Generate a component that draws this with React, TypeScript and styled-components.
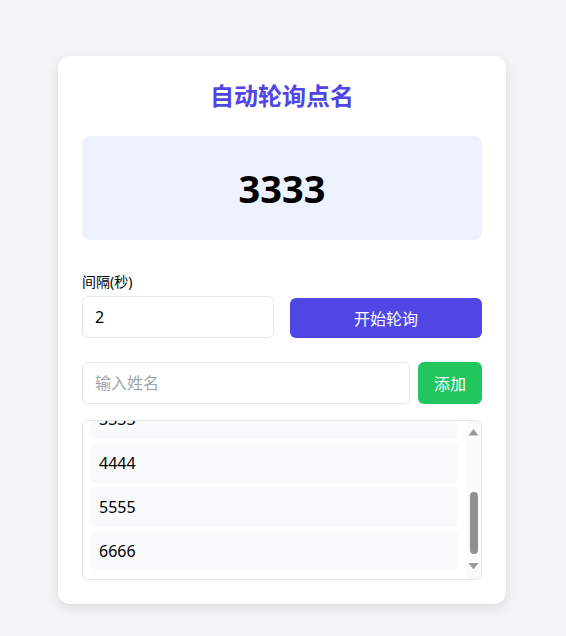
import React, { useEffect, useRef } from "react";
import styled, { createGlobalStyle } from "styled-components";

const Global = createGlobalStyle`
  html, body { margin: 0; padding: 0; background: #f3f4f6; }
  body { font-family: "Noto Sans", "Noto Sans CJK SC", sans-serif; color: #000; }
  * { box-sizing: border-box; }
`;

const Page = styled.div`
  min-height: 636px;
  padding: 56px 2px 0 0;
  display: flex;
  justify-content: center;
  align-items: flex-start;
`;

const Card = styled.div`
  width: 448px;
  background: #fff;
  border-radius: 12px;
  padding: 24px;
  box-shadow: 0 4px 12px rgba(0, 0, 0, 0.1);
  display: flex;
  flex-direction: column;
`;

const Title = styled.h1`
  margin: 0;
  font-size: 24px;
  line-height: 32px;
  font-weight: 700;
  color: #4f46e5;
  text-align: center;
`;

const Display = styled.div`
  margin-top: 24px;
  height: 104px;
  background: #eef2ff;
  border-radius: 8px;
  display: flex;
  align-items: center;
  justify-content: center;
  font-size: 38px;
  font-weight: 700;
`;

const ControlRow = styled.div`
  margin-top: 32px;
  display: grid;
  grid-template-columns: 1fr 1fr;
  gap: 16px;
  align-items: end;
`;

const Field = styled.div`
  display: flex;
  flex-direction: column;
  gap: 4px;
`;

const Label = styled.label`
  font-size: 14px;
  line-height: 20px;
`;

const Input = styled.input`
  height: 42px;
  border: 1px solid #e5e7eb;
  border-radius: 6px;
  padding: 0 12px;
  font-family: inherit;
  font-size: 16px;
  color: #000;
  outline: none;
  background: #fff;
  width: 100%;
  &::placeholder { color: #9ca3af; }
`;

const Button = styled.button<{ $color: string; $h: number }>`
  height: ${(p) => p.$h}px;
  border: none;
  border-radius: 6px;
  background: ${(p) => p.$color};
  color: #fff;
  font-family: inherit;
  font-size: 16px;
  padding: 0 16px;
  cursor: pointer;
  white-space: nowrap;
`;

const AddRow = styled.div`
  margin-top: 24px;
  display: flex;
  gap: 8px;
  & > input { flex: 1; }
`;

const ListBox = styled.div`
  margin-top: 16px;
  height: 160px;
  border: 1px solid #e5e7eb;
  border-radius: 6px;
  overflow: hidden;
  display: flex;
`;

const Scroller = styled.div`
  flex: 1;
  padding: 8px;
  overflow-y: auto;
  display: flex;
  flex-direction: column;
  gap: 4px;
  scrollbar-width: none;
  &::-webkit-scrollbar { display: none; }
`;

const ScrollBar = styled.div`
  width: 15px;
  flex: 0 0 15px;
  background: #fbfbfb;
  display: flex;
  flex-direction: column;
`;

const Arrow = styled.svg<{ $h: number }>`
  display: block;
  width: 15px;
  height: ${(p) => p.$h}px;
  flex: 0 0 auto;
`;

const Track = styled.div`
  flex: 1;
  display: flex;
  flex-direction: column;
  justify-content: flex-end;
  align-items: center;
  padding-bottom: 6px;
`;

const Thumb = styled.div`
  width: 8px;
  height: 62px;
  border-radius: 4px;
  background: #8f8f8f;
`;

const Item = styled.div`
  flex: 0 0 40px;
  height: 40px;
  background: #f9fafb;
  border-radius: 4px;
  padding: 0 8px;
  display: flex;
  align-items: center;
  font-size: 16px;
`;

const names = ["1111", "2222", "3333", "4444", "5555", "6666"];

export default function App() {
  const listRef = useRef<HTMLDivElement>(null);
  useEffect(() => {
    if (listRef.current) listRef.current.scrollTop = listRef.current.scrollHeight;
  }, []);
  return (
    <>
      <Global />
      <Page>
        <Card>
          <Title>自动轮询点名</Title>
          <Display>3333</Display>
          <ControlRow>
            <Field>
              <Label>间隔(秒)</Label>
              <Input defaultValue="2" />
            </Field>
            <Button $color="#4f46e5" $h={40}>开始轮询</Button>
          </ControlRow>
          <AddRow>
            <Input placeholder="输入姓名" />
            <Button $color="#22c55e" $h={42}>添加</Button>
          </AddRow>
          <ListBox>
            <Scroller ref={listRef}>
              {names.map((n) => (
                <Item key={n}>{n}</Item>
              ))}
            </Scroller>
            <ScrollBar>
              <Arrow $h={17} viewBox="0 0 15 17">
                <polygon points="2.5,14.5 12.5,14.5 7.5,8" fill="#9a9a9a" />
              </Arrow>
              <Track>
                <Thumb />
              </Track>
              <Arrow $h={19} viewBox="0 0 15 19">
                <polygon points="2.5,3 12.5,3 7.5,9.5" fill="#9a9a9a" />
              </Arrow>
            </ScrollBar>
          </ListBox>
        </Card>
      </Page>
    </>
  );
}
